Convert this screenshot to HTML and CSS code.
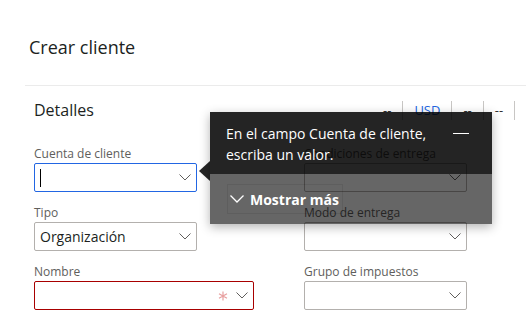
FILE: index.html
```html
<!DOCTYPE html>
<html>
<head>
  <meta charset="UTF-8">
  <title>Crear cliente</title>
  <link rel="stylesheet" href="styles.css">
</head>
<body>
  <h1 class="title">Crear cliente</h1>

  <div class="section">
    <div class="section-head">
      <div class="section-title">Detalles</div>
      <div class="summary">
        <span class="summary-item">--</span>
        <span class="summary-item currency">USD</span>
        <span class="summary-item">--</span>
        <span class="summary-item">--</span>
        <span class="summary-item">--</span>
      </div>
    </div>

    <div class="form">
      <div class="field">
        <label class="label">Cuenta de cliente</label>
        <div class="input focused"><span class="caret"></span>
          <svg class="chevron" viewBox="0 0 12 7"><path d="M0.5 0.5 L6 6 L11.5 0.5"/></svg>
        </div>
      </div>
      <div class="field">
        <label class="label">Condiciones de entrega</label>
        <div class="input">
          <svg class="chevron" viewBox="0 0 12 7"><path d="M0.5 0.5 L6 6 L11.5 0.5"/></svg>
        </div>
      </div>
      <div class="field">
        <label class="label">Tipo</label>
        <div class="input"><span class="value">Organización</span>
          <svg class="chevron" viewBox="0 0 12 7"><path d="M0.5 0.5 L6 6 L11.5 0.5"/></svg>
        </div>
      </div>
      <div class="field">
        <label class="label">Modo de entrega</label>
        <div class="input">
          <svg class="chevron" viewBox="0 0 12 7"><path d="M0.5 0.5 L6 6 L11.5 0.5"/></svg>
        </div>
      </div>
      <div class="field wide">
        <label class="label">Nombre</label>
        <div class="input invalid">
          <svg class="required" viewBox="0 0 10 10"><path d="M5 0.5 V9.5 M1 2.7 L9 7.3 M1 7.3 L9 2.7"/></svg>
          <svg class="chevron" viewBox="0 0 12 7"><path d="M0.5 0.5 L6 6 L11.5 0.5"/></svg>
        </div>
      </div>
      <div class="field">
        <label class="label">Grupo de impuestos</label>
        <div class="input">
          <svg class="chevron" viewBox="0 0 12 7"><path d="M0.5 0.5 L6 6 L11.5 0.5"/></svg>
        </div>
      </div>
    </div>
  </div>

  <!-- validation callout for the focused field -->
  <div class="callout">
    <div class="callout-main">
      <p class="callout-text">En el campo Cuenta de cliente, escriba un valor.</p>
      <span class="minimize"></span>
    </div>
    <div class="callout-more">
      <button class="more-btn">
        <svg class="more-chevron" viewBox="0 0 14 8"><path d="M0.5 0.5 L7 7 L13.5 0.5"/></svg>
        Mostrar más
      </button>
    </div>
  </div>
</body>
</html>
```

FILE: styles.css
```css
body { margin: 0; background: #fff; font-family: "Open Sans", "Noto Sans", sans-serif; color: #323130; overflow: hidden; position: relative; height: 318px; }

.title { margin: 35px 0 0 29px; font-size: 18px; line-height: 24px; font-weight: 400; color: #201f1e; }

.section { margin: 26px 0 0 25px; border-top: 1px solid #ebebeb; }
.section-head { display: flex; align-items: center; padding-top: 12px; white-space: nowrap; }
.section-title { width: 347px; flex: none; padding-left: 9px; box-sizing: border-box; font-size: 16px; line-height: 24px; color: #201f1e; }
.summary { display: flex; }
.summary-item { padding: 0 11px; line-height: 19px; font-size: 13px; color: #323130; border-left: 1px solid #c8c6c4; }
.summary-item:first-child { border-left: none; }
.summary-item.currency { color: #2266e3; }

.form { display: grid; grid-template-columns: 220px 163px; column-gap: 50px; row-gap: 12px; margin: 23px 0 0 9px; }
.field { width: 163px; }
.field.wide { width: 220px; }
.label { display: block; font-size: 12px; line-height: 18px; color: #605e5c; }
.input { position: relative; height: 29px; box-sizing: border-box; border: 1px solid #b3b0ad; border-radius: 2px; display: flex; align-items: center; padding: 0 5px; }
.input.focused { border-color: #2266e3; }
.input.invalid { border-color: #a80000; }
.value { font-size: 14px; color: #201f1e; }
.caret { width: 1px; height: 18px; background: #000; }
.chevron { width: 12px; height: 7px; margin-left: auto; fill: none; stroke: #605e5c; stroke-width: 1; }
.required { width: 10px; height: 10px; margin-left: auto; margin-right: 8px; fill: none; stroke: #e8a0a0; stroke-width: 1.2; }
.required + .chevron { margin-left: 0; }

.callout { position: absolute; left: 210px; top: 112px; width: 282px; color: #fff; box-shadow: 0 3px 10px rgba(0, 0, 0, 0.3); }
.callout::before { content: ""; position: absolute; left: -11px; top: 49px; border-style: solid; border-width: 10px 11px 10px 0; border-color: transparent rgba(0, 0, 0, 0.86) transparent transparent; }
.callout-main { display: flex; align-items: flex-start; padding: 11px 23px 9px 16px; background: rgba(0, 0, 0, 0.86); }
.callout-text { margin: 0; flex: 1; font-size: 14px; line-height: 21px; padding-right: 6px; }
.minimize { width: 16px; height: 1px; background: #fff; margin-top: 10px; flex: none; }
.callout-more { padding: 10px 0 10px 17px; background: rgba(0, 0, 0, 0.6); }
.more-btn { display: flex; align-items: center; gap: 6px; height: 30px; padding: 0 3px 0 2px; background: transparent; border: 1px solid rgba(0, 0, 0, 0.08); color: #fff; font-family: inherit; font-size: 14px; font-weight: 700; }
.more-chevron { width: 14px; height: 8px; fill: none; stroke: #fff; stroke-width: 1.3; }
```
